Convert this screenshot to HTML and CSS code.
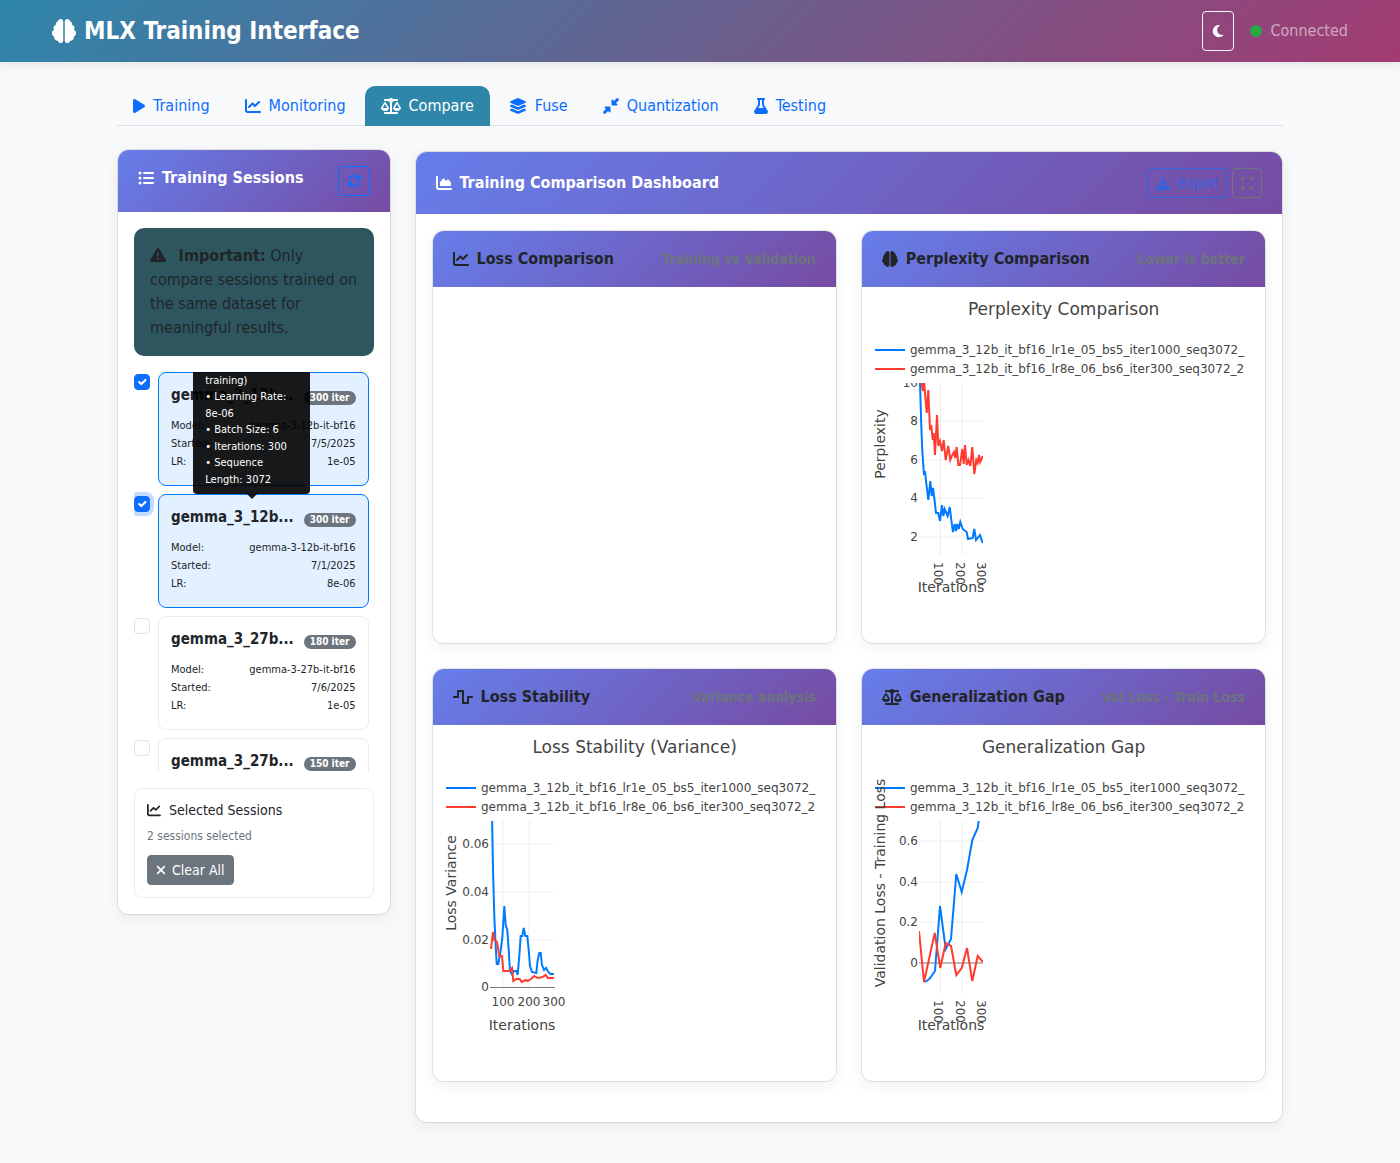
FILE: index.html
```html
<!DOCTYPE html>
<html lang="en">
<head>
<meta charset="utf-8">
<meta name="viewport" content="width=device-width, initial-scale=1">
<title>MLX Training Interface</title>
<link rel="stylesheet" href="styles.css">
</head>
<body>
<svg class="sprite" aria-hidden="true">
  <symbol id="brain" viewBox="0 0 512 512"><path d="M184 0c30.9 0 56 25.1 56 56V456c0 30.9-25.1 56-56 56c-28.9 0-52.7-21.9-55.7-50.1c-5.2 1.4-10.7 2.1-16.3 2.1c-35.3 0-64-28.7-64-64c0-7.4 1.3-14.6 3.6-21.2C21.4 367.4 0 338.2 0 304c0-31.9 18.7-59.5 45.8-72.3C37.1 220.8 32 207 32 192c0-30.7 21.6-56.3 50.4-62.6C80.8 123.9 80 118 80 112c0-29.9 20.6-55.1 48.3-62.1C131.3 21.9 155.1 0 184 0zM328 0c28.9 0 52.6 21.9 55.7 49.9c27.8 7 48.3 32.1 48.3 62.1c0 6-.8 11.9-2.4 17.4c28.8 6.2 50.4 31.9 50.4 62.6c0 15-5.1 28.8-13.8 39.7C493.3 244.5 512 272.1 512 304c0 34.2-21.4 63.4-51.6 74.8c2.3 6.6 3.6 13.8 3.6 21.2c0 35.3-28.7 64-64 64c-5.6 0-11.1-.7-16.3-2.1c-3 28.2-26.8 50.1-55.7 50.1c-30.9 0-56-25.1-56-56V56c0-30.9 25.1-56 56-56z"/></symbol>
  <symbol id="play" viewBox="0 0 384 512"><path d="M73 39c-14.8-9.1-33.4-9.4-48.5-.9S0 62.6 0 80V432c0 17.4 9.4 33.4 24.5 41.9s33.7 8.1 48.5-.9L361 297c14.3-8.7 23-24.2 23-41s-8.7-32.2-23-41L73 39z"/></symbol>
  <symbol id="chart-line" viewBox="0 0 512 512"><path d="M64 64c0-17.7-14.3-32-32-32S0 46.3 0 64V400c0 44.2 35.8 80 80 80H480c17.7 0 32-14.3 32-32s-14.3-32-32-32H80c-8.8 0-16-7.2-16-16V64zm406.6 86.6c12.5-12.5 12.5-32.8 0-45.3s-32.8-12.5-45.3 0L320 210.7l-57.4-57.4c-12.5-12.5-32.8-12.5-45.3 0l-112 112c-12.5 12.5-12.5 32.8 0 45.3s32.8 12.5 45.3 0L240 221.3l57.4 57.4c12.5 12.5 32.8 12.5 45.3 0l128-128z"/></symbol>
  <symbol id="chart-area" viewBox="0 0 512 512"><path d="M64 64c0-17.7-14.3-32-32-32S0 46.3 0 64V400c0 44.2 35.8 80 80 80H480c17.7 0 32-14.3 32-32s-14.3-32-32-32H80c-8.8 0-16-7.2-16-16V64zm96 288H448c17.7 0 32-14.3 32-32V251.8c0-7.6-2.7-15-7.7-20.8l-65.8-76.8c-12.1-14.2-33.7-15-46.9-1.8l-21 21c-10 10-26.4 9.2-35.4-1.6l-39.2-47c-12.6-15.1-35.7-15.4-48.7-.6L135.9 215c-5.1 5.8-7.9 13.3-7.9 21.1v84c0 17.7 14.3 32 32 32z"/></symbol>
  <symbol id="scale" viewBox="0 0 640 512"><path d="M384 32H512c17.7 0 32 14.3 32 32s-14.3 32-32 32H398.4c-5.2 25.8-22.9 47.1-46.4 57.3V448H512c17.7 0 32 14.3 32 32s-14.3 32-32 32H320 128c-17.7 0-32-14.3-32-32s14.3-32 32-32H288V153.3c-23.5-10.3-41.2-31.6-46.4-57.3H128c-17.7 0-32-14.3-32-32s14.3-32 32-32H256c14.6-19.4 37.8-32 64-32s49.4 12.6 64 32zm55.6 288H584.4L512 195.8 439.6 320zM512 416c-62.9 0-115.2-34-126-78.9c-2.6-11 1-22.3 6.7-32.1l95.2-163.2c5-8.6 14.2-13.8 24.1-13.8s19.1 5.3 24.1 13.8l95.2 163.2c5.7 9.8 9.3 21.1 6.7 32.1C627.2 382 574.9 416 512 416zM126.8 195.8L54.4 320H199.3L126.8 195.8zM.9 337.1c-2.6-11 1-22.3 6.7-32.1l95.2-163.2c5-8.6 14.2-13.8 24.1-13.8s19.1 5.3 24.1 13.8l95.2 163.2c5.7 9.8 9.3 21.1 6.7 32.1C242 382 189.7 416 126.8 416S11.7 382 .9 337.1z"/></symbol>
  <symbol id="layers" viewBox="0 0 576 512"><path d="M264.5 5.2c14.9-6.9 32.1-6.9 47 0l218.6 101c8.5 3.9 13.9 12.4 13.9 21.8s-5.4 17.9-13.9 21.8l-218.6 101c-14.9 6.9-32.1 6.9-47 0L45.9 149.8C37.4 145.8 32 137.3 32 128s5.4-17.9 13.9-21.8L264.5 5.2zM476.9 209.6l53.2 24.6c8.5 3.9 13.9 12.4 13.9 21.8s-5.4 17.9-13.9 21.8l-218.6 101c-14.9 6.9-32.1 6.9-47 0L45.9 277.8C37.4 273.8 32 265.3 32 256s5.4-17.9 13.9-21.8l53.2-24.6 152 70.2c23.4 10.8 50.4 10.8 73.8 0l152-70.2zm-152 198.2l152-70.2 53.2 24.6c8.5 3.9 13.9 12.4 13.9 21.8s-5.4 17.9-13.9 21.8l-218.6 101c-14.9 6.9-32.1 6.9-47 0L45.9 405.8C37.4 401.8 32 393.3 32 384s5.4-17.9 13.9-21.8l53.2-24.6 152 70.2c23.4 10.8 50.4 10.8 73.8 0z"/></symbol>
  <symbol id="compress" viewBox="0 0 512 512"><path d="M439 7c9.4-9.4 24.6-9.4 33.9 0l32 32c9.4 9.4 9.4 24.6 0 33.9l-87 87 39 39c6.9 6.9 8.9 17.2 5.2 26.2s-12.5 14.8-22.2 14.8H296c-13.3 0-24-10.7-24-24V72c0-9.7 5.8-18.5 14.8-22.2s19.3-1.7 26.2 5.2l39 39L439 7zM72 272H216c13.3 0 24 10.7 24 24V440c0 9.7-5.8 18.5-14.8 22.2s-19.3 1.7-26.2-5.2l-39-39L73 505c-9.4 9.4-24.6 9.4-33.9 0L7 473c-9.4-9.4-9.4-24.6 0-33.9l87-87L55 313c-6.9-6.9-8.9-17.2-5.2-26.2s12.5-14.8 22.2-14.8z"/></symbol>
  <symbol id="flask" viewBox="0 0 448 512"><path d="M288 0H160 128C110.3 0 96 14.3 96 32s14.3 32 32 32V196.8c0 11.8-3.3 23.5-9.5 33.5L10.3 406.2C3.6 417.2 0 429.7 0 442.6C0 480.9 31.1 512 69.4 512H378.6c38.3 0 69.4-31.1 69.4-69.4c0-12.8-3.6-25.4-10.3-36.4L329.5 230.4c-6.2-10.1-9.5-21.7-9.5-33.5V64c17.7 0 32-14.3 32-32s-14.3-32-32-32H288zM192 196.8V64h64V196.8c0 23.7 6.6 46.9 19 67.1L309.5 320h-171L173 263.9c12.4-20.2 19-43.4 19-67.1z"/></symbol>
  <symbol id="moon" viewBox="0 0 384 512"><path d="M223.5 32C100 32 0 132.3 0 256S100 480 223.5 480c60.6 0 115.5-24.2 155.8-63.4c5-4.9 6.3-12.5 3.1-18.7s-10.1-9.7-17-8.5c-9.8 1.7-19.8 2.6-30.1 2.6c-96.9 0-175.5-78.8-175.5-176c0-65.8 36-123.1 89.3-153.3c6.1-3.5 9.2-10.5 7.7-17.3s-7.3-11.9-14.3-12.5c-6.3-.5-12.6-.8-19-.8z"/></symbol>
  <symbol id="list" viewBox="0 0 512 512"><circle cx="64" cy="96" r="48"/><circle cx="64" cy="256" r="48"/><circle cx="64" cy="416" r="48"/><rect x="160" y="64" width="352" height="64" rx="32"/><rect x="160" y="224" width="352" height="64" rx="32"/><rect x="160" y="384" width="352" height="64" rx="32"/></symbol>
  <symbol id="rotate" viewBox="0 0 512 512"><path d="M105.1 202.6c7.7-21.8 20.2-42.3 37.8-59.8c62.5-62.5 163.8-62.5 226.3 0L386.3 160H352c-17.7 0-32 14.3-32 32s14.3 32 32 32H463.5c0 0 0 0 0 0h.4c17.7 0 32-14.3 32-32V80c0-17.7-14.3-32-32-32s-32 14.3-32 32v35.2L414.4 97.6c-87.5-87.5-229.3-87.5-316.8 0C73.2 122 55.6 150.7 44.8 181.4c-5.9 16.7 2.9 34.9 19.5 40.8s34.9-2.9 40.8-19.5zM39 289.3c-5 1.5-9.8 4.2-13.7 8.2c-4 4-6.7 8.8-8.1 14c-.3 1.2-.6 2.5-.8 3.8c-.3 1.7-.4 3.4-.4 5.1V432c0 17.7 14.3 32 32 32s32-14.3 32-32V396.9l17.6 17.5 0 0c87.5 87.4 229.3 87.4 316.7 0c24.4-24.4 42.1-53.1 52.9-83.7c5.9-16.7-2.9-34.9-19.5-40.8s-34.9 2.9-40.8 19.5c-7.7 21.8-20.2 42.3-37.8 59.8c-62.5 62.5-163.8 62.5-226.3 0l-.1-.1L125.6 352H160c17.7 0 32-14.3 32-32s-14.3-32-32-32H48.4c-1.6 0-3.2 .1-4.8 .3s-3.1 .5-4.6 1z"/></symbol>
  <symbol id="warning" viewBox="0 0 512 512"><path d="M256 32c14.2 0 27.3 7.5 34.5 19.8l216 368c7.3 12.4 7.3 27.7 .2 40.1S486.3 480 472 480H40c-14.3 0-27.6-7.7-34.7-20.1s-7-27.8 .2-40.1l216-368C228.7 39.5 241.8 32 256 32zm0 128c-13.3 0-24 10.7-24 24V296c0 13.3 10.7 24 24 24s24-10.7 24-24V184c0-13.3-10.7-24-24-24zm32 224a32 32 0 1 0 -64 0 32 32 0 1 0 64 0z"/></symbol>
  <symbol id="download" viewBox="0 0 512 512"><path d="M288 32c0-17.7-14.3-32-32-32s-32 14.3-32 32V274.7l-73.4-73.4c-12.5-12.5-32.8-12.5-45.3 0s-12.5 32.8 0 45.3l128 128c12.5 12.5 32.8 12.5 45.3 0l128-128c12.5-12.5 12.5-32.8 0-45.3s-32.8-12.5-45.3 0L288 274.7V32zM64 352c-35.3 0-64 28.7-64 64v32c0 35.3 28.7 64 64 64H448c35.3 0 64-28.7 64-64V416c0-35.3-28.7-64-64-64H346.5l-45.3 45.3c-25 25-65.5 25-90.5 0L165.5 352H64zm368 56a24 24 0 1 1 0 48 24 24 0 1 1 0-48z"/></symbol>
  <symbol id="expand" viewBox="0 0 448 512"><path d="M32 32C14.3 32 0 46.3 0 64v96c0 17.7 14.3 32 32 32s32-14.3 32-32V96h64c17.7 0 32-14.3 32-32s-14.3-32-32-32H32zM64 352c0-17.7-14.3-32-32-32s-32 14.3-32 32v96c0 17.7 14.3 32 32 32h96c17.7 0 32-14.3 32-32s-14.3-32-32-32H64V352zM320 32c-17.7 0-32 14.3-32 32s14.3 32 32 32h64v64c0 17.7 14.3 32 32 32s32-14.3 32-32V64c0-17.7-14.3-32-32-32H320zM448 352c0-17.7-14.3-32-32-32s-32 14.3-32 32v64H320c-17.7 0-32 14.3-32 32s14.3 32 32 32h96c17.7 0 32-14.3 32-32V352z"/></symbol>
  <symbol id="wave" viewBox="0 0 640 512"><path d="M128 64c0-17.7 14.3-32 32-32H320c17.7 0 32 14.3 32 32V416h96V256c0-17.7 14.3-32 32-32H608c17.7 0 32 14.3 32 32s-14.3 32-32 32H512V448c0 17.7-14.3 32-32 32H320c-17.7 0-32-14.3-32-32V96H192V256c0 17.7-14.3 32-32 32H32c-17.7 0-32-14.3-32-32s14.3-32 32-32h96V64z"/></symbol>
  <symbol id="xmark" viewBox="0 0 384 512"><path d="M342.6 150.6c12.5-12.5 12.5-32.8 0-45.3s-32.8-12.5-45.3 0L192 210.7 86.6 105.4c-12.5-12.5-32.8-12.5-45.3 0s-12.5 32.8 0 45.3L146.7 256 41.4 361.4c-12.5 12.5-12.5 32.8 0 45.3s32.8 12.5 45.3 0L192 301.3 297.4 406.6c12.5 12.5 32.8 12.5 45.3 0s12.5-32.8 0-45.3L237.3 256 342.6 150.6z"/></symbol>
</svg>

<header class="topbar">
  <div class="topbar-inner">
    <h1 class="brand"><svg class="icon icon-24"><use href="#brain"/></svg>MLX Training Interface</h1>
    <div class="topbar-tools">
      <button class="theme-toggle" type="button" aria-label="Toggle theme"><svg class="icon icon-theme"><use href="#moon"/></svg></button>
      <div class="status"><span class="status-dot"></span>Connected</div>
    </div>
  </div>
</header>

<main class="page">
  <nav class="tabs">
    <a class="tab" href="#training"><svg class="icon icon-narrow"><use href="#play"/></svg>Training</a>
    <a class="tab" href="#monitoring"><svg class="icon"><use href="#chart-line"/></svg>Monitoring</a>
    <a class="tab tab-active" href="#compare" aria-current="page"><svg class="icon icon-wide"><use href="#scale"/></svg>Compare</a>
    <a class="tab" href="#fuse"><svg class="icon icon-layers"><use href="#layers"/></svg>Fuse</a>
    <a class="tab" href="#quantization"><svg class="icon"><use href="#compress"/></svg>Quantization</a>
    <a class="tab" href="#testing"><svg class="icon icon-flask"><use href="#flask"/></svg>Testing</a>
  </nav>

  <div class="layout">
    <section class="card sidebar">
      <div class="card-header">
        <h2 class="card-title sidebar-title"><svg class="icon"><use href="#list"/></svg>Training Sessions</h2>
        <button class="btn btn-primary-outline" type="button" aria-label="Refresh sessions"><svg class="icon icon-14"><use href="#rotate"/></svg></button>
      </div>
      <div class="card-body">
        <div class="alert" role="alert"><svg class="icon alert-icon"><use href="#warning"/></svg> <strong>Important:</strong> Only compare sessions trained on the same dataset for meaningful results.</div>

        <div class="sessions">
          <div class="session">
            <input class="check" type="checkbox" id="s1" checked>
            <label class="session-card session-selected" for="s1">
              <span class="session-head"><span class="session-name">gemma_3_12b...</span><span class="badge">300 iter</span></span>
              <span class="session-row"><span>Model:</span><span>gemma-3-12b-it-bf16</span></span>
              <span class="session-row"><span>Started:</span><span>7/5/2025</span></span>
              <span class="session-row"><span>LR:</span><span>1e-05</span></span>
            </label>
          </div>
          <div class="session">
            <input class="check check-focus" type="checkbox" id="s2" checked>
            <label class="session-card session-selected" for="s2">
              <span class="session-head"><span class="session-name">gemma_3_12b...</span><span class="badge">300 iter</span></span>
              <span class="session-row"><span>Model:</span><span>gemma-3-12b-it-bf16</span></span>
              <span class="session-row"><span>Started:</span><span>7/1/2025</span></span>
              <span class="session-row"><span>LR:</span><span>8e-06</span></span>
            </label>
            <div class="tooltip" role="tooltip">training)<br>• Learning Rate:<br>8e-06<br>• Batch Size: 6<br>• Iterations: 300<br>• Sequence<br>Length: 3072</div>
          </div>
          <div class="session">
            <input class="check" type="checkbox" id="s3">
            <label class="session-card" for="s3">
              <span class="session-head"><span class="session-name">gemma_3_27b...</span><span class="badge">180 iter</span></span>
              <span class="session-row"><span>Model:</span><span>gemma-3-27b-it-bf16</span></span>
              <span class="session-row"><span>Started:</span><span>7/6/2025</span></span>
              <span class="session-row"><span>LR:</span><span>1e-05</span></span>
            </label>
          </div>
          <div class="session">
            <input class="check" type="checkbox" id="s4">
            <label class="session-card" for="s4">
              <span class="session-head"><span class="session-name">gemma_3_27b...</span><span class="badge">150 iter</span></span>
            </label>
          </div>
        </div>

        <div class="selection">
          <h3 class="selection-title"><svg class="icon icon-14"><use href="#chart-line"/></svg>Selected Sessions</h3>
          <p class="selection-count">2 sessions selected</p>
          <button class="btn btn-secondary" type="button"><svg class="icon icon-x"><use href="#xmark"/></svg>Clear All</button>
        </div>
      </div>
    </section>

    <section class="card dashboard">
      <div class="card-header">
        <h2 class="card-title"><svg class="icon"><use href="#chart-area"/></svg>Training Comparison Dashboard</h2>
        <div class="actions">
          <button class="btn btn-primary-outline" type="button" disabled><svg class="icon icon-14"><use href="#download"/></svg>Export</button>
          <button class="btn btn-secondary-outline" type="button" aria-label="Fullscreen"><svg class="icon icon-expand"><use href="#expand"/></svg></button>
        </div>
      </div>
      <div class="card-body charts">

        <article class="card">
          <div class="card-header chart-header">
            <h3 class="chart-title"><svg class="icon"><use href="#chart-line"/></svg>Loss Comparison</h3>
            <small class="chart-note">Training vs Validation</small>
          </div>
          <div class="chart-body"></div>
        </article>

        <article class="card">
          <div class="card-header chart-header">
            <h3 class="chart-title"><svg class="icon"><use href="#brain"/></svg>Perplexity Comparison</h3>
            <small class="chart-note">Lower is better</small>
          </div>
          <div class="chart-body">
            <svg class="plot" role="img" aria-label="Perplexity Comparison">
              <clipPath id="clip-p"><rect x="49" y="88" width="64" height="172"/></clipPath>
              <clipPath id="ticks-p"><rect x="0" y="88" width="160" height="252"/></clipPath>
              <text class="plot-title" x="50%" y="20">Perplexity Comparison</text>
              <path class="line-blue" d="M5 55H35"/><text x="40" y="59">gemma_3_12b_it_bf16_lr1e_05_bs5_iter1000_seq3072_</text>
              <path class="line-red" d="M5 74H35"/><text x="40" y="78">gemma_3_12b_it_bf16_lr8e_06_bs6_iter300_seq3072_2</text>
              <path class="gridline" d="M70.500 88V260M92 88V260M49 126H113M49 165H113M49 203H113M49 242H113"/>
              <g class="tick-y" clip-path="url(#ticks-p)"><text x="48" y="92">10</text><text x="48" y="130">8</text><text x="48" y="169">6</text><text x="48" y="207">4</text><text x="48" y="246">2</text></g>
              <g clip-path="url(#clip-p)">
                <polyline class="line-blue" points="50,88 51.300,131 52.300,156 54,180 55,176 56,186 58.300,205 60.300,186 61.700,201 63,193 64.300,203 66,218 68.300,218 70,226 72,210 73.300,221 74.700,214 77.700,221 79.700,212 81.700,228 83,237 84.700,229 86,236 87.300,229 88.700,234 90.300,227 92.700,234 96.700,237 98,244 102.700,243 104.300,234 106,245 110,240 112.700,248"/>
                <polyline class="line-red" points="51,80 52.700,96 54,86 56.700,118 58.300,95 60,135 61.300,130 62.700,145 63.700,138 65,160 67,120 68.300,151 70,146 72,156 73.700,145 75.700,165 78.300,151 80.300,165 82.300,160 84,157 85.300,163 86.700,152 88.300,170 90,170 92.300,154 93.700,169 95,150 96.700,170 98.300,165 100.300,171 102.300,152 104.300,179 106.300,165 107.700,168 109,160 110.300,167 112.700,161"/>
              </g>
              <text transform="translate(64 267) rotate(90)">100</text><text transform="translate(86 267) rotate(90)">200</text><text transform="translate(107 267) rotate(90)">300</text>
              <text class="axis-title" x="81" y="297">Iterations</text>
              <text class="axis-title" transform="translate(15 149) rotate(-90)">Perplexity</text>
            </svg>
          </div>
        </article>

        <article class="card">
          <div class="card-header chart-header">
            <h3 class="chart-title"><svg class="icon icon-wide"><use href="#wave"/></svg>Loss Stability</h3>
            <small class="chart-note">Variance analysis</small>
          </div>
          <div class="chart-body">
            <svg class="plot" role="img" aria-label="Loss Stability (Variance)">
              <clipPath id="clip-v"><rect x="49" y="88" width="65" height="172"/></clipPath>
              <text class="plot-title" x="50%" y="20">Loss Stability (Variance)</text>
              <path class="line-blue" d="M5 55H35"/><text x="40" y="59">gemma_3_12b_it_bf16_lr1e_05_bs5_iter1000_seq3072_</text>
              <path class="line-red" d="M5 74H35"/><text x="40" y="78">gemma_3_12b_it_bf16_lr8e_06_bs6_iter300_seq3072_2</text>
              <path class="gridline" d="M62 88V260M88 88V260M50 111H113M50 159H113M50 207H113"/>
              <path class="zeroline" d="M49 254.500H114"/>
              <g class="tick-y"><text x="48" y="115">0.06</text><text x="48" y="163">0.04</text><text x="48" y="211">0.02</text><text x="48" y="258">0</text></g>
              <g clip-path="url(#clip-v)">
                <polyline class="line-blue" points="51,80 52,137 53.300,183 54.700,213 55.700,231 57.300,231 59.300,220 61.300,205 63.300,173 64.700,192 66.300,197 67.700,217 69,238 70.700,241 72.700,238 75.300,238 76.700,242 78.300,223 79.700,203 81.300,203 82.700,195 84.300,203 86.300,203 87.700,217 89,233 91,239 95.300,240 96.700,227 98.300,220 99.700,220 101,232 103,237 105,235 107.300,239 109.300,241 113,241"/>
                <polyline class="line-red" points="50,216 52,199 53.300,207 56,209 58.300,223 61,223 62.300,238 68.700,238 71,235 72.300,248 75.300,246 78.700,246 80.700,249 85,247 86.700,248 90,246 93.300,243 96.700,245 101.700,244 104.700,242 106.700,245 113,245"/>
              </g>
              <g class="tick-x"><text x="62" y="273">100</text><text x="88" y="273">200</text><text x="113" y="273">300</text></g>
              <text class="axis-title" x="81" y="297">Iterations</text>
              <text class="axis-title" transform="translate(15 150) rotate(-90)">Loss Variance</text>
            </svg>
          </div>
        </article>

        <article class="card">
          <div class="card-header chart-header">
            <h3 class="chart-title"><svg class="icon icon-wide"><use href="#scale"/></svg>Generalization Gap</h3>
            <small class="chart-note">Val Loss - Train Loss</small>
          </div>
          <div class="chart-body">
            <svg class="plot" role="img" aria-label="Generalization Gap">
              <clipPath id="clip-g"><rect x="49" y="88" width="64" height="172"/></clipPath>
              <text class="plot-title" x="50%" y="20">Generalization Gap</text>
              <path class="line-blue" d="M5 55H35"/><text x="40" y="59">gemma_3_12b_it_bf16_lr1e_05_bs5_iter1000_seq3072_</text>
              <path class="line-red" d="M5 74H35"/><text x="40" y="78">gemma_3_12b_it_bf16_lr8e_06_bs6_iter300_seq3072_2</text>
              <path class="gridline" d="M70.500 88V260M92 88V260M49 108H113M49 149H113M49 189H113"/>
              <path class="zeroline" d="M49 230H113"/>
              <g class="tick-y"><text x="48" y="112">0.6</text><text x="48" y="153">0.4</text><text x="48" y="193">0.2</text><text x="48" y="234">0</text></g>
              <g clip-path="url(#clip-g)">
                <polyline class="line-blue" points="55,249 59.300,246 65,238 70,173 75.700,216 81,206 86.300,141 91.700,159 97,137 102.300,107 107.700,95 109,86"/>
                <polyline class="line-red" points="49,198 54,249 64.700,200 70.300,235 75.700,210 81,213 86.300,242 91.700,235 97,215 102.300,248 107.700,223 113,229"/>
              </g>
              <text transform="translate(64 267) rotate(90)">100</text><text transform="translate(86 267) rotate(90)">200</text><text transform="translate(107 267) rotate(90)">300</text>
              <text class="axis-title" x="81" y="297">Iterations</text>
              <text class="axis-title" transform="translate(15 150) rotate(-90)">Validation Loss - Training Loss</text>
            </svg>
          </div>
        </article>
      </div>
    </section>
  </div>
</main>
</body>
</html>
```
FILE: styles.css
```css
* { box-sizing: border-box; }

body {
  margin: 0;
  background: #f8f9fb;
  color: #212529;
  font: 16px/24px Tahoma, "DejaVu Sans Condensed", "DejaVu Sans", sans-serif;
}

h1, h2, h3, p { margin: 0; }
button { font: inherit; cursor: pointer; }

.sprite { display: none; }
.icon { width: 16px; height: 16px; fill: currentColor; flex: none; }
.icon-14 { width: 14px; height: 14px; }
.icon-24 { width: 24px; height: 24px; }
.icon-narrow { width: 12px; }
.icon-wide { width: 20px; }
.icon-layers { width: 18px; }
.icon-flask { width: 14px; }
.icon-theme { width: 12px; height: 14px; }
.icon-expand { width: 12px; height: 14px; }
.icon-x { width: 10px; height: 14px; }

/* Top bar */
.topbar {
  padding: 11px 0;
  background: linear-gradient(135deg, #2e86ab, #a23b72);
  box-shadow: 0 2px 10px rgba(0, 0, 0, .1);
}
.topbar-inner {
  display: flex;
  align-items: center;
  justify-content: space-between;
  max-width: 1320px;
  margin: 0 auto;
  padding: 0 12px;
}
.brand {
  display: flex;
  align-items: center;
  gap: 8px;
  color: #fff;
  font-size: 24px;
  line-height: 40px;
}
.topbar-tools { display: flex; align-items: center; gap: 16px; }
.theme-toggle {
  display: flex;
  align-items: center;
  justify-content: center;
  width: 32px;
  height: 40px;
  padding: 0;
  border: 1px solid #f8f9fa;
  border-radius: 4px;
  background: none;
  color: #f8f9fa;
}
.status { display: flex; align-items: center; gap: 8px; color: rgba(255, 255, 255, .55); }
.status-dot { width: 12px; height: 12px; border-radius: 50%; background: #28a745; }

/* Page and tabs */
.page { width: 85%; margin: 0 auto; padding: 24px 12px 40px; }
.tabs {
  display: flex;
  gap: 3px;
  border-bottom: 1px solid #dee2e6;
}
.tab {
  display: flex;
  align-items: center;
  gap: 8px;
  margin-bottom: -1px;
  padding: 8px 16px;
  border-radius: 10px 10px 0 0;
  color: #0d6efd;
  text-decoration: none;
}
.tab-active { background: #2e86ab; color: #fff; }

.layout {
  display: grid;
  grid-template-columns: minmax(0, 1fr) minmax(0, 3fr);
  align-items: start;
  margin: 0 -12px;
  padding-top: 25px;
}
.layout > .card { margin: 0 12px; }

/* Cards */
.card {
  border: 1px solid rgba(0, 0, 0, .09);
  border-radius: 12px;
  background: #fff;
  background-clip: padding-box;
  box-shadow: 0 4px 15px rgba(0, 0, 0, .06);
}
.card-header {
  display: flex;
  align-items: center;
  justify-content: space-between;
  gap: 8px;
  padding: 16px 20px;
  border-radius: 11px 11px 0 0;
  background: linear-gradient(135deg, #667eea, #764ba2);
}
.card-title {
  display: flex;
  align-items: center;
  gap: 8px;
  color: #fff;
  font-size: 16px;
}
.card-body { padding: 16px; }
.sidebar { transform: translateY(-2px); }
.sidebar-title { margin-bottom: 6px; }
.actions { display: flex; gap: 4px; }

.btn {
  display: inline-flex;
  align-items: center;
  gap: 8px;
  padding: 4px 8px;
  border: 1px solid;
  border-radius: 4px;
  background: none;
  font-size: 14px;
  line-height: 20px;
}
.btn .icon { margin: 3px 0; }
.btn-primary-outline { border-color: #0d6efd; color: #0d6efd; }
.btn-primary-outline:disabled { opacity: .65; }
.btn-secondary-outline { border-color: #6c757d; color: #6c757d; }
.btn-secondary { gap: 6px; border-color: #6c757d; background: #6c757d; color: #fff; }

/* Sidebar */
.alert {
  margin-bottom: 16px;
  padding: 16px 12px 16px 16px;
  border-radius: 10px;
  background: #2e565e;
}
.alert-icon { margin-right: 8px; vertical-align: -2px; }

.sessions {
  display: flex;
  flex-direction: column;
  gap: 8px;
  height: 400px;
  padding-right: 5px;
  overflow: hidden;
}
.session {
  position: relative;
  display: flex;
  align-items: flex-start;
  gap: 8px;
  flex: none;
}
.check {
  appearance: none;
  flex: none;
  width: 16px;
  height: 16px;
  margin: 2px 0 0;
  border: 1px solid #dee2e6;
  border-radius: 4px;
  background: #fff;
}
.check:checked {
  border-color: #0d6efd;
  background: #0d6efd url("data:image/svg+xml,%3Csvg xmlns='http://www.w3.org/2000/svg' viewBox='0 0 20 20'%3E%3Cpath fill='none' stroke='%23fff' stroke-linecap='round' stroke-linejoin='round' stroke-width='3' d='m6 10 3 3 6-6'/%3E%3C/svg%3E") center / contain;
}
.check-focus { box-shadow: 0 0 0 4px rgba(13, 110, 253, .25); }
.session-card {
  flex: 1;
  min-width: 0;
  min-height: 114px;
  padding: 12px;
  border: 1px solid #e9ecef;
  border-radius: 8px;
  background: #fff;
}
.session-selected { border-color: #007bff; background: #e3f0ff; }
.session-head {
  display: flex;
  align-items: flex-end;
  justify-content: space-between;
  margin-bottom: 12px;
}
.session-name { font-size: 15px; font-weight: bold; line-height: 20px; }
.badge {
  padding: 0 6px;
  border-radius: 8px;
  background: #6c757d;
  color: #fff;
  font-size: 10px;
  font-weight: bold;
  line-height: 14px;
}
.session-row {
  display: flex;
  justify-content: space-between;
  font-size: 11px;
  line-height: 18px;
}

.tooltip {
  position: absolute;
  bottom: 100%;
  left: 50%;
  z-index: 1;
  width: 117px;
  margin-left: -58px;
  padding: 8px 12px 6px;
  border-radius: 4px;
  background: rgba(0, 0, 0, .9);
  color: #fff;
  font-size: 11px;
  line-height: 1.5;
  white-space: nowrap;
}
.tooltip::after {
  content: "";
  position: absolute;
  top: 100%;
  left: 50%;
  margin-left: -5px;
  border: 5px solid transparent;
  border-top-color: rgba(0, 0, 0, .9);
  border-bottom: 0;
}

.selection {
  margin-top: 16px;
  padding: 12px;
  border: 1px solid #e9ecef;
  border-radius: 8px;
}
.selection-title {
  display: flex;
  align-items: center;
  gap: 8px;
  margin-bottom: 8px;
  font-size: 14px;
  font-weight: normal;
  line-height: 18px;
}
.selection-count {
  margin-bottom: 10px;
  color: #6c757d;
  font-size: 12px;
  line-height: 18px;
}

/* Charts */
.charts {
  display: grid;
  grid-template-columns: repeat(2, minmax(0, 1fr));
  gap: 24px;
  padding-bottom: 40px;
}
.chart-title { display: flex; align-items: center; gap: 8px; font-size: 16px; }
.chart-note { color: #6c757d; font-size: 14px; font-weight: bold; }
.chart-body { height: 356px; padding: 8px; }
.plot {
  display: block;
  width: 100%;
  height: 340px;
  overflow: hidden;
  fill: #444;
  font-family: Verdana, "DejaVu Sans", sans-serif;
  font-size: 12px;
}
.plot-title { font-size: 17px; text-anchor: middle; }
.axis-title { font-size: 14px; text-anchor: middle; }
.tick-y { text-anchor: end; }
.tick-x { text-anchor: middle; }
.gridline { fill: none; stroke: #eee; }
.zeroline { fill: none; stroke: #777; }
.line-blue, .line-red { fill: none; stroke-width: 2; }
.line-blue { stroke: #007aff; }
.line-red { stroke: #ff3b30; }
```
